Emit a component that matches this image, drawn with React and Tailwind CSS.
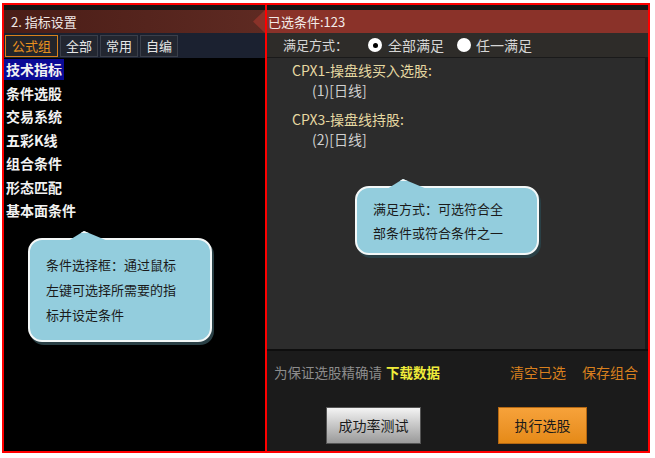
import React from "react";

const font = { fontFamily: '"Noto Sans CJK SC", "Liberation Sans", sans-serif' };

const listItems = ["技术指标", "条件选股", "交易系统", "五彩K线", "组合条件", "形态匹配", "基本面条件"];
const tabs = ["公式组", "全部", "常用", "自编"];

const Bubble = ({ lines, className, tipLeft, pad }) => (
  <div className={`absolute ${className}`}>
    <div className={`relative rounded-[14px] border-2 border-[#f4f8f8] bg-[#93cddd] shadow-[2px_3px_0_#2a4046] px-[16px] ${pad} text-[13px] leading-[24px] text-[#1a1a1a]`}>
      <div
        className="absolute top-[-9px] w-[40px] h-[10px] bg-[#93cddd] border-t-2 border-[#f4f8f8] [clip-path:polygon(0_100%,40%_0,100%_100%)]"
        style={{ left: tipLeft }}
      />
      {lines.map((l) => (
        <div key={l}>{l}</div>
      ))}
    </div>
  </div>
);

const App = () => {
  return (
    <div className="w-[655px] h-[458px] bg-white pt-[3px] pl-[2px]" style={font}>
      <div className="relative w-[648px] h-[450px] border-2 border-[#ff0000] flex">
        {/* left panel */}
        <div className="relative w-[261px] h-full bg-black flex flex-col">
          <div className="h-[5px] bg-[#161616]" />
          <div className="relative h-[23px] bg-gradient-to-r from-[#4a1d17] to-[#5e2a22] flex items-center pl-[7px] text-[13px] text-[#f0e8e6]">
            2. 指标设置
            <div className="absolute right-0 top-0 w-[12px] h-[23px] bg-[#8a3229] [clip-path:polygon(100%_0,0_50%,100%_100%)]" />
          </div>
          <div className="h-[25px] bg-[#1b2130] flex items-center gap-[2px] pl-[1px]">
            {tabs.map((t, i) => (
              <div
                key={t}
                className={`h-[22px] flex items-center text-[13px] border ${
                  i === 0
                    ? "border-[#d8801c] text-[#e8901e] bg-[#23252a] px-[6px]"
                    : "border-[#3a3f4a] text-[#e6e6e6] bg-[#222630] px-[5px]"
                }`}
              >
                {t}
              </div>
            ))}
          </div>
          <div className="flex flex-col text-[14px] font-bold text-[#f2f2f2]">
            {listItems.map((t, i) => (
              <div key={t} className="h-[23.5px] flex items-center">
                <span className={`pl-[2px] pr-[2px] ${i === 0 ? "bg-[#0a0a96] leading-[21px]" : ""}`}>{t}</span>
              </div>
            ))}
          </div>
          <Bubble
            className="left-[24px] top-[233px] w-[184px]"
            tipLeft="38px"
            pad="pt-[12px] pb-[13px] leading-[25px]"
            lines={["条件选择框：通过鼠标", "左键可选择所需要的指", "标并设定条件"]}
          />
        </div>
        <div className="w-[2px] h-full bg-[#ff0000]" />
        {/* right panel */}
        <div className="relative flex-1 h-full bg-[#1b1b1b] flex flex-col">
          <div className="h-[5px] bg-[#161616]" />
          <div className="h-[23px] bg-[#8a3229] flex items-center pl-[1px] text-[13px] text-[#f2ebe8]">
            已选条件:123
          </div>
          <div className="h-[24px] bg-[#2e2c29] flex items-center pl-[16px] text-[13px] text-[#d6d6d6]">
            <span>满足方式：</span>
            <span className="ml-[20px] w-[14px] h-[14px] rounded-full bg-white flex items-center justify-center">
              <span className="w-[5px] h-[5px] rounded-full bg-black" />
            </span>
            <span className="ml-[6px] text-[14px]">全部满足</span>
            <span className="ml-[13px] w-[14px] h-[14px] rounded-full bg-white" />
            <span className="ml-[5px] text-[14px]">任一满足</span>
          </div>
          <div className="h-[292px] mr-[3px] bg-[#2c2c2c] border-t border-[#1a1a1a] pl-[25px] pt-[2px] text-[14px] leading-[20px]">
            <div className="text-[#e6d9a2]">CPX1-操盘线买入选股:</div>
            <div className="pl-[20px] text-[#d0d0d0]">(1)[日线]</div>
            <div className="mt-[9px] text-[#e6d9a2]">CPX3-操盘线持股:</div>
            <div className="pl-[20px] text-[#d0d0d0]">(2)[日线]</div>
          </div>
          <div className="h-[2px] bg-[#0e0e0e]" />
          <div className="flex items-center h-[42px] pl-[7px] pr-[10px] text-[13.5px]">
            <span className="text-[#8c8c8c]">为保证选股精确请</span>
            <span className="ml-[4px] font-bold text-[#f0ec3a]">下载数据</span>
            <span className="ml-auto text-[14px] text-[#d9801e]">清空已选</span>
            <span className="ml-[16px] text-[14px] text-[#d9801e]">保存组合</span>
          </div>
          <div className="flex items-start pt-[14px] pl-[59px]">
            <div className="w-[95px] h-[37px] flex items-center justify-center text-[14px] text-[#1a1a1a] border border-[#555] bg-gradient-to-b from-[#f4f4f4] to-[#9a9a9a]">
              成功率测试
            </div>
            <div className="ml-[77px] w-[89px] h-[37px] flex items-center justify-center text-[14px] text-[#1a1a1a] border border-[#b56812] bg-gradient-to-b from-[#f7a23a] to-[#e58a16]">
              执行选股
            </div>
          </div>
          <Bubble
            className="left-[88px] top-[181px] w-[184px]"
            tipLeft="30px"
            pad="pt-[9px] pb-[8px]"
            lines={["满足方式：可选符合全", "部条件或符合条件之一"]}
          />
        </div>
      </div>
    </div>
  );
};

export default App;
